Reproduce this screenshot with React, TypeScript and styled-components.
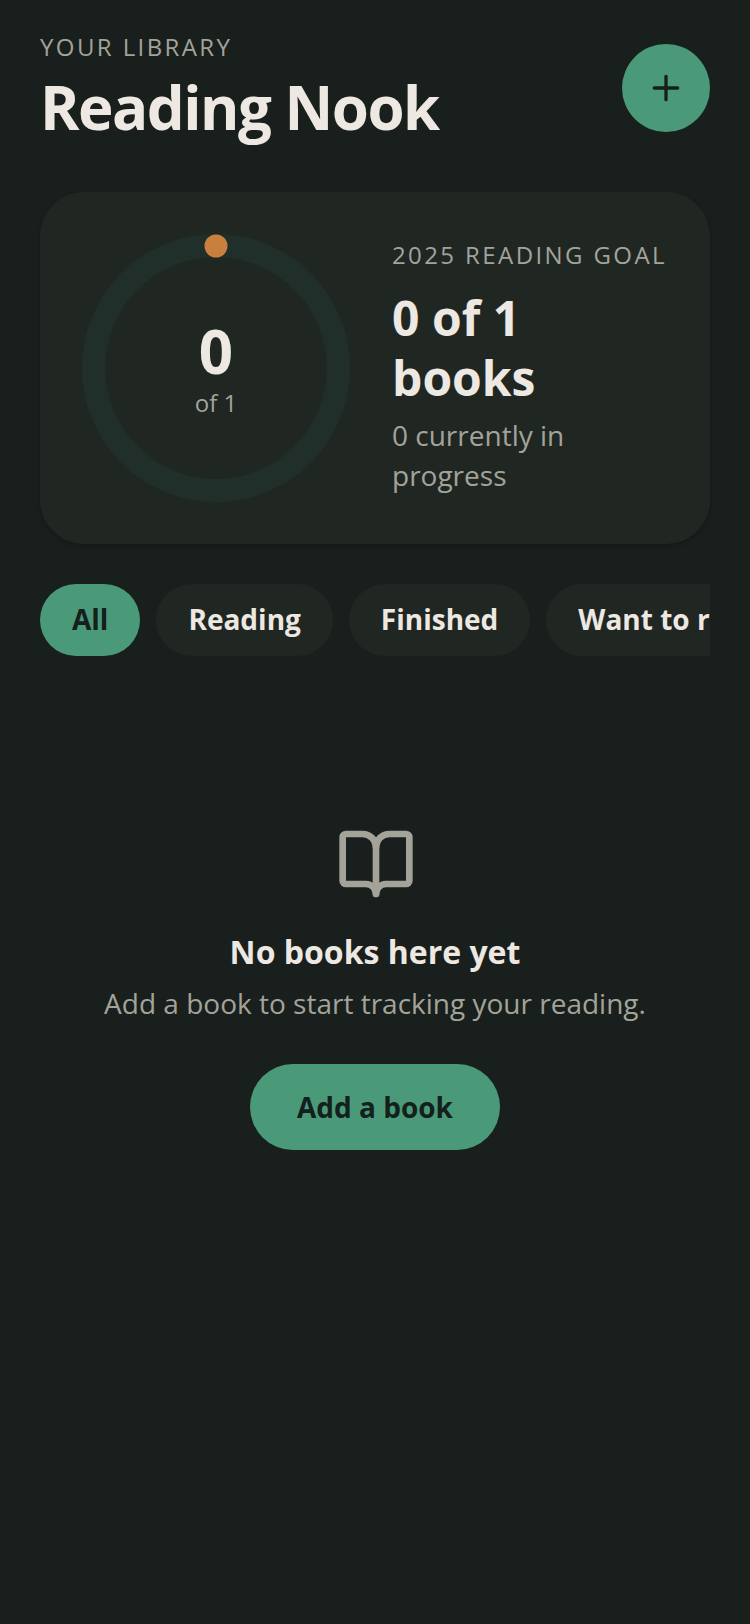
import React, { FC } from "react";
import styled, { createGlobalStyle } from "styled-components";
import { BookOpen, Plus } from "lucide-react";

const GlobalStyle = createGlobalStyle`
  html, body {
    margin: 0;
    padding: 0;
    background: #191f1d;
  }
  * {
    box-sizing: border-box;
  }
`;

const Page = styled.div`
  width: 750px;
  min-height: 1624px;
  padding: 31px 40px 0;
  background: #191f1d;
  color: #ede8e1;
  font-family: "Open Sans", sans-serif;
`;

const Header = styled.header`
  display: flex;
  justify-content: space-between;
  align-items: flex-start;
`;

const Eyebrow = styled.div`
  font-size: 24px;
  line-height: 32px;
  letter-spacing: 2.4px;
  color: #a3a39a;
`;

const Title = styled.h1`
  margin: 6px 0 0;
  font-size: 60px;
  line-height: 76px;
  font-weight: 700;
  letter-spacing: -1.5px;
`;

const AddButton = styled.button`
  display: flex;
  align-items: center;
  justify-content: center;
  width: 88px;
  height: 88px;
  margin-top: 13px;
  padding: 0;
  border: none;
  border-radius: 50%;
  background: #4a9a7a;
  color: #14201b;
`;

const GoalCard = styled.section`
  display: flex;
  align-items: center;
  gap: 42px;
  margin-top: 47px;
  padding: 42px;
  border-radius: 44px;
  background: #202723;
  box-shadow: 0 2px 4px rgba(0, 0, 0, 0.2);
`;

const Ring = styled.div`
  display: grid;
  flex: none;
  width: 268px;
  height: 268px;
  place-items: center;
  & > * {
    grid-area: 1 / 1;
  }
`;

const RingCount = styled.div`
  display: flex;
  flex-direction: column;
  align-items: center;
  gap: 1px;
  padding-bottom: 3px;
`;

const RingValue = styled.div`
  font-size: 60px;
  line-height: 72px;
  font-weight: 700;
`;

const RingTotal = styled.div`
  font-size: 24px;
  line-height: 30px;
  color: #a3a39a;
`;

const GoalText = styled.div`
  min-width: 0;
  padding-bottom: 2px;
`;

const GoalLabel = styled.div`
  font-size: 24px;
  line-height: 32px;
  letter-spacing: 2.4px;
  white-space: nowrap;
  color: #a3a39a;
`;

const GoalTitle = styled.div`
  margin-top: 17px;
  font-size: 48px;
  line-height: 60px;
  font-weight: 700;
`;

const GoalNote = styled.div`
  margin-top: 7px;
  font-size: 28px;
  line-height: 40px;
  color: #a3a39a;
`;

const Filters = styled.nav`
  display: flex;
  gap: 16px;
  margin-top: 40px;
  overflow: hidden;
`;

const Pill = styled.div<{ $active?: boolean }>`
  flex: none;
  height: 72px;
  padding: 0 32px;
  border-radius: 36px;
  font-size: 28px;
  line-height: 70px;
  font-weight: 700;
  white-space: nowrap;
  background: ${p => (p.$active ? "#4a9a7a" : "#202723")};
  color: ${p => (p.$active ? "#14201b" : "#ede8e1")};
`;

const Empty = styled.section`
  display: flex;
  flex-direction: column;
  align-items: center;
  margin-top: 168px;
  color: #a3a39a;
`;

const EmptyIcon = styled(BookOpen)`
  margin-left: 2px;
`;

const EmptyTitle = styled.div`
  margin-top: 26px;
  font-size: 32px;
  line-height: 44px;
  font-weight: 700;
  color: #ede8e1;
`;

const EmptyNote = styled.div`
  margin-top: 7px;
  font-size: 28px;
  line-height: 44px;
`;

const AddBookButton = styled.button`
  height: 86px;
  width: 250px;
  margin-top: 39px;
  border: none;
  border-radius: 43px;
  background: #4a9a7a;
  color: #14201b;
  font-family: inherit;
  font-size: 28px;
  font-weight: 700;
`;

const filters = ["All", "Reading", "Finished", "Want to read"];

const App: FC = () => {
  return (
    <Page>
      <GlobalStyle />
      <Header>
        <div>
          <Eyebrow>YOUR LIBRARY</Eyebrow>
          <Title>Reading Nook</Title>
        </div>
        <AddButton aria-label="Add">
          <Plus size={40} />
        </AddButton>
      </Header>

      <GoalCard>
        <Ring>
          <svg width="268" height="268" viewBox="0 0 268 268">
            <circle cx="134" cy="134" r="122.5" fill="none" stroke="#212f2b" strokeWidth="23" />
            <circle cx="134" cy="12" r="11.5" fill="#c9803f" />
          </svg>
          <RingCount>
            <RingValue>0</RingValue>
            <RingTotal>of 1</RingTotal>
          </RingCount>
        </Ring>
        <GoalText>
          <GoalLabel>2025 READING GOAL</GoalLabel>
          <GoalTitle>0 of 1 books</GoalTitle>
          <GoalNote>0 currently in progress</GoalNote>
        </GoalText>
      </GoalCard>

      <Filters>
        {filters.map((f, i) => (
          <Pill key={f} $active={i === 0}>
            {f}
          </Pill>
        ))}
      </Filters>

      <Empty>
        <EmptyIcon size={80} />
        <EmptyTitle>No books here yet</EmptyTitle>
        <EmptyNote>Add a book to start tracking your reading.</EmptyNote>
        <AddBookButton>Add a book</AddBookButton>
      </Empty>
    </Page>
  );
};

export default App;
